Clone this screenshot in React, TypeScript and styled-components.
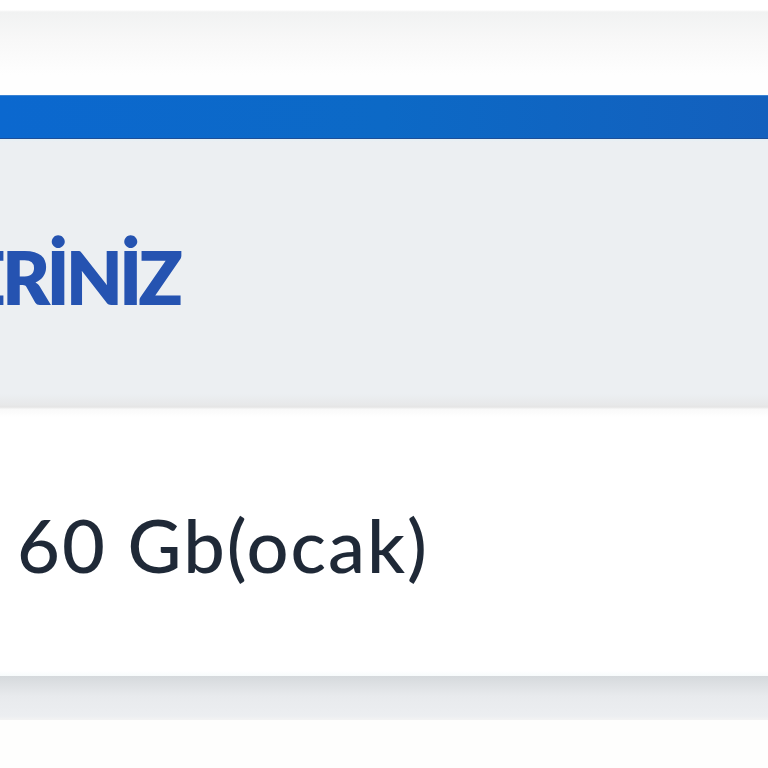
import React from "react";
import styled, { createGlobalStyle } from "styled-components";

const Global = createGlobalStyle`
  html, body { margin: 0; padding: 0; background: #ffffff; }
  body { width: 768px; height: 768px; overflow: hidden; font-family: "Lato", "Noto Sans", sans-serif; }
`;

const Page = styled.div`
  width: 768px;
  height: 768px;
  display: flex;
  flex-direction: column;
  background: #fefefd;
  overflow: hidden;
`;

const TopShade = styled.div`
  height: 95px;
  flex: none;
  background: linear-gradient(
    to bottom,
    #ffffff 0px,
    #ffffff 10px,
    #f1f2f2 12px,
    #f8f8f8 40px,
    #fefefe 75px,
    #fefefe 95px
  );
`;

const BlueBar = styled.div`
  height: 44px;
  flex: none;
  background: linear-gradient(to right, #0b68cf 0%, #0c69c6 50%, #1360bd 100%);
  border-top: 1px solid #3a83d4;
  border-bottom: 1px solid #1d4f98;
  box-sizing: border-box;
`;

const Header = styled.div`
  height: 270px;
  flex: none;
  display: flex;
  align-items: center;
  background: linear-gradient(
    to bottom,
    #e4f0f6 0px,
    #eceff2 3px,
    #eceff2 255px,
    #e7e8e9 266px,
    #e5e5e5 268px,
    #f7f7f7 270px
  );
  overflow: hidden;
`;

const Title = styled.h1`
  margin: 0 0 0 -36px;
  padding: 6px 0 0 0;
  font-family: "Lato", sans-serif;
  font-weight: 800;
  font-size: 73px;
  letter-spacing: -3.5px;
  color: #2553b1;
  white-space: nowrap;
  line-height: 1;
`;

const Row = styled.div`
  height: 267px;
  flex: none;
  display: flex;
  align-items: center;
  background: linear-gradient(to bottom, #f9f9f9 0px, #ffffff 8px, #ffffff 262px, #f7fbfc 267px);
  padding-left: 17px;
`;

const Value = styled.span`
  font-family: "Lato", sans-serif;
  font-weight: 500;
  font-size: 74px;
  letter-spacing: 2px;
  color: #1f2937;
  white-space: nowrap;
  line-height: 1;
  padding-top: 4px;
`;

const Band = styled.div`
  height: 44px;
  flex: none;
  background: linear-gradient(to bottom, #d5d9dc 0px, #dde0e3 8px, #e8eaed 20px, #eceef1 40px, #f3f3f3 44px);
`;

export default function App() {
  return (
    <>
      <Global />
      <Page>
        <TopShade />
        <BlueBar />
        <Header>
          <Title>ERİNİZ</Title>
        </Header>
        <Row>
          <Value>60 Gb(ocak)</Value>
        </Row>
        <Band />
      </Page>
    </>
  );
}
